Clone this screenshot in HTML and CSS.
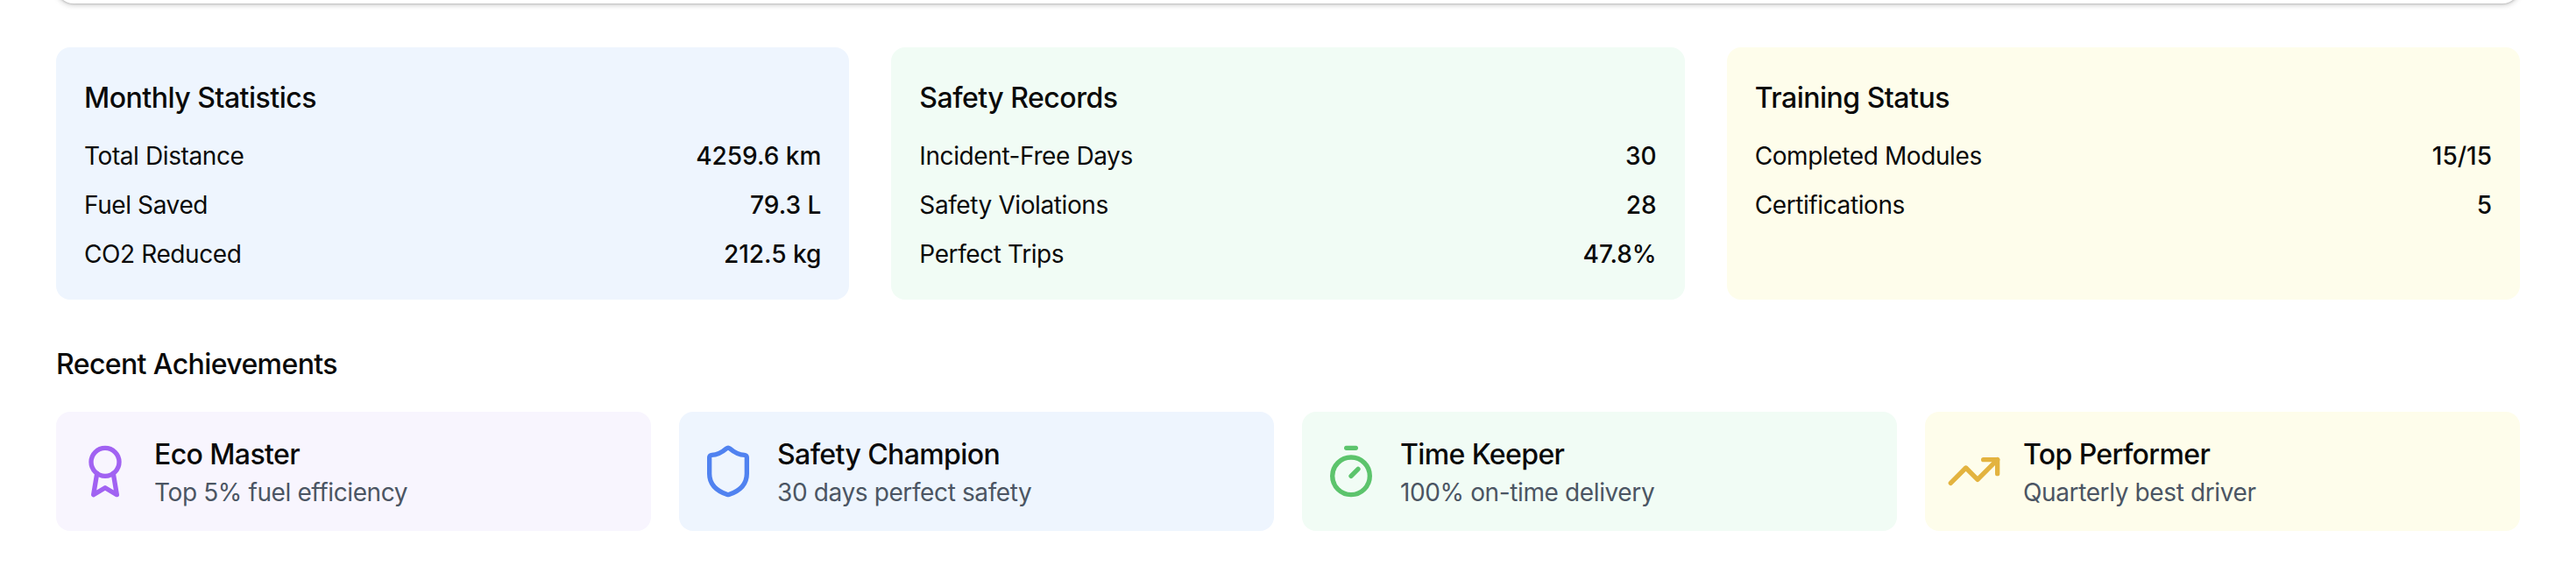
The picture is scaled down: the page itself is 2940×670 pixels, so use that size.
FILE: index.html
```html
<!DOCTYPE html>
<html lang="en">
<head>
    <meta charset="UTF-8">
    <meta name="viewport" content="width=device-width, initial-scale=1.0">
    <title>Driver Performance</title>
    <link rel="stylesheet" href="styles.css">
</head>
<body>
    <div class="top-panel"></div>

    <div class="stats-grid">
        <div class="stat-card bg-blue">
            <h3>Monthly Statistics</h3>
            <div class="stat-row"><span>Total Distance</span><span class="stat-value">4259.6 km</span></div>
            <div class="stat-row"><span>Fuel Saved</span><span class="stat-value">79.3 L</span></div>
            <div class="stat-row"><span>CO2 Reduced</span><span class="stat-value">212.5 kg</span></div>
        </div>
        <div class="stat-card bg-green">
            <h3>Safety Records</h3>
            <div class="stat-row"><span>Incident-Free Days</span><span class="stat-value">30</span></div>
            <div class="stat-row"><span>Safety Violations</span><span class="stat-value">28</span></div>
            <div class="stat-row"><span>Perfect Trips</span><span class="stat-value">47.8%</span></div>
        </div>
        <div class="stat-card bg-yellow">
            <h3>Training Status</h3>
            <div class="stat-row"><span>Completed Modules</span><span class="stat-value">15/15</span></div>
            <div class="stat-row"><span>Certifications</span><span class="stat-value">5</span></div>
        </div>
    </div>

    <h2>Recent Achievements</h2>

    <div class="achievements">
        <div class="achievement bg-purple">
            <svg class="icon icon-purple" viewBox="0 0 24 24">
                <circle cx="12" cy="8" r="6"/>
                <path d="M15.477 12.89 17 22l-5-3-5 3 1.523-9.11"/>
            </svg>
            <div>
                <div class="achievement-title">Eco Master</div>
                <div class="achievement-desc">Top 5% fuel efficiency</div>
            </div>
        </div>
        <div class="achievement bg-blue">
            <svg class="icon icon-blue" viewBox="0 0 24 24">
                <path d="M20 13c0 5-3.5 7.5-7.66 8.95a1 1 0 0 1-.67-.01C7.5 20.5 4 18 4 13V6a1 1 0 0 1 1-1c2 0 4.5-1.2 6.24-2.72a1.17 1.17 0 0 1 1.52 0C14.51 3.81 17 5 19 5a1 1 0 0 1 1 1z"/>
            </svg>
            <div>
                <div class="achievement-title">Safety Champion</div>
                <div class="achievement-desc">30 days perfect safety</div>
            </div>
        </div>
        <div class="achievement bg-green">
            <svg class="icon icon-green" viewBox="0 0 24 24">
                <line x1="10" x2="14" y1="2" y2="2"/>
                <line x1="12" x2="15" y1="14" y2="11"/>
                <circle cx="12" cy="14" r="8"/>
            </svg>
            <div>
                <div class="achievement-title">Time Keeper</div>
                <div class="achievement-desc">100% on-time delivery</div>
            </div>
        </div>
        <div class="achievement bg-yellow">
            <svg class="icon icon-yellow" viewBox="0 0 24 24">
                <polyline points="22 7 13.5 15.5 8.5 10.5 2 17"/>
                <polyline points="16 7 22 7 22 13"/>
            </svg>
            <div>
                <div class="achievement-title">Top Performer</div>
                <div class="achievement-desc">Quarterly best driver</div>
            </div>
        </div>
    </div>
</body>
</html>
```

FILE: styles.css
```css
html, body {
    height: 100%;
    overflow: hidden;
}
body {
    font-family: Inter, "Liberation Sans", sans-serif;
    margin: 0;
    padding: 0 64px;
    background-color: #fff;
    color: #0a0a0a;
}
.top-panel {
    height: 40px;
    margin-top: -36px;
    margin-bottom: 50px;
    background-color: #fff;
    border-radius: 24px;
    box-shadow: 0 2px 6px rgba(0, 0, 0, 0.18), 0 1px 2px rgba(0, 0, 0, 0.15);
}
.stats-grid {
    display: grid;
    grid-template-columns: repeat(3, 1fr);
    gap: 48px;
}
.stat-card {
    padding: 32px;
    border-radius: 16px;
}
.stat-card h3 {
    margin: 0 0 20px;
    font-size: 32px;
    line-height: 52px;
    font-weight: 500;
    letter-spacing: -0.5px;
}
.stat-row {
    display: flex;
    justify-content: space-between;
    font-size: 28px;
    line-height: 40px;
    letter-spacing: -0.4px;
    margin-top: 16px;
}
.stat-card h3 + .stat-row {
    margin-top: 0;
}
.stat-value {
    font-weight: 500;
    letter-spacing: 0;
}
h2 {
    margin: 48px 0 28px;
    font-size: 32px;
    line-height: 52px;
    font-weight: 500;
    letter-spacing: -0.6px;
}
.achievements {
    display: grid;
    grid-template-columns: repeat(4, 1fr);
    gap: 32px;
}
.achievement {
    display: flex;
    align-items: center;
    gap: 24px;
    padding: 24px;
    border-radius: 16px;
}
.achievement-title {
    font-size: 32px;
    line-height: 50px;
    font-weight: 500;
    letter-spacing: -0.6px;
}
.achievement-desc {
    font-size: 28px;
    line-height: 36px;
    margin-bottom: 2px;
    letter-spacing: -0.38px;
    color: #4b5563;
}
.icon {
    width: 64px;
    height: 64px;
    flex-shrink: 0;
    fill: none;
    stroke-width: 2;
    stroke-linecap: round;
    stroke-linejoin: round;
}
.icon-purple { stroke: #a162f2; }
.icon-blue { stroke: #5082f0; }
.icon-green { stroke: #5cc46c; }
.icon-yellow { stroke: #e3b33f; }
.bg-blue { background-color: #eef5fe; }
.bg-green { background-color: #f1fcf5; }
.bg-yellow { background-color: #fefdeb; }
.bg-purple { background-color: #f8f5fe; }
```
